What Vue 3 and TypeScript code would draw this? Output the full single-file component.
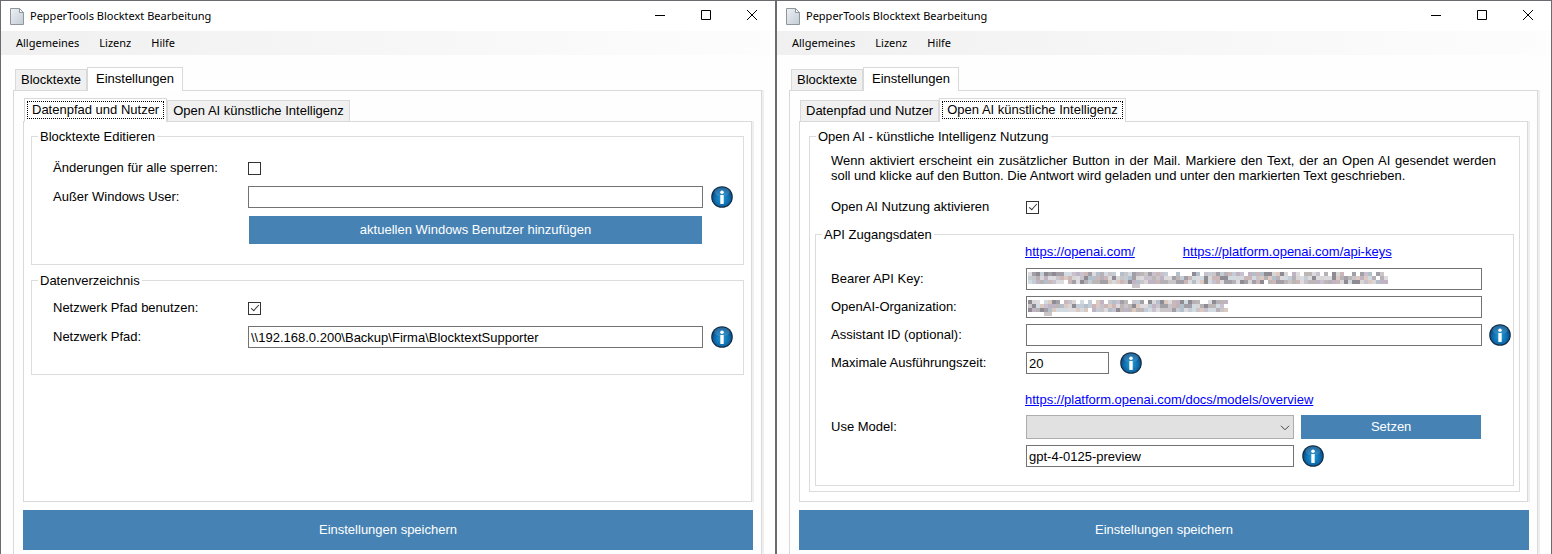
<script setup lang="ts">
import { defineComponent, h, ref } from 'vue'

const title = 'PepperTools Blocktext Bearbeitung'
const menus = ['Allgemeines', 'Lizenz', 'Hilfe']
const outerTabs = ['Blocktexte', 'Einstellungen']
const innerTabs = ['Datenpfad und Nutzer', 'Open AI künstliche Intelligenz']
const windows = [
  { id: 'paths', active: 0 },
  { id: 'openai', active: 1 },
]

const lockAll = ref(false)
const exceptUser = ref('')
const useNetwork = ref(true)
const networkPath = ref('\\\\192.168.0.200\\Backup\\Firma\\BlocktextSupporter')
const aiEnabled = ref(true)
const assistantId = ref('')
const maxTime = ref('20')
const model = ref('')
const modelName = ref('gpt-4-0125-preview')

interface Cell { x: number; y: number; fill: string }

const palette = [
  '#c9c5c9', '#b5b1b6', '#d9d6d8', '#a39fa6', '#c4ccd6', '#dcc9bf', '#bfb3c4',
  '#8f8b92', '#d3dbe2', '#cbb7b8', '#dedbde', '#b3bfcb', '#bcb6b6', '#c8c2ce',
]

function mosaic(columns: number, seed: number, tails: number[]): Cell[] {
  const cells: Cell[] = []
  let state = seed
  const next = (): number => {
    state = (state * 1103515245 + 12345) % 2147483648
    return Math.floor(state / 65536)
  }
  for (let c = 0; c < columns; c++) {
    for (let r = 0; r < 3; r++) {
      const skip = r === 0 ? next() % 5 === 0 : next() % 25 === 0
      const fill = palette[next() % palette.length]
      if (!skip) cells.push({ x: c * 4, y: r * 4, fill })
    }
  }
  for (const c of tails) cells.push({ x: c * 4, y: 12, fill: '#c9c5c9' })
  return cells
}

const secrets = [
  { id: 'api-key', label: 'Bearer API Key:', width: 360, cells: mosaic(90, 71, [26, 27]) },
  { id: 'organization', label: 'OpenAI-Organization:', width: 200, cells: mosaic(50, 29, [4, 5]) },
]

const InfoButton = defineComponent({
  props: { uid: { type: String, required: true } },
  setup(props) {
    return () =>
      h('button', { type: 'button', class: 'info', 'aria-label': 'Info' }, [
        h('svg', { viewBox: '0 0 22 22', width: 22, height: 22 }, [
          h('defs', [
            h('radialGradient', { id: props.uid, cx: '50%', cy: '58%', r: '52%' }, [
              h('stop', { offset: '0', 'stop-color': '#1fa0d8' }),
              h('stop', { offset: '0.65', 'stop-color': '#0f6fb0' }),
              h('stop', { offset: '1', 'stop-color': '#0b4c86' }),
            ]),
          ]),
          h('circle', { cx: 11, cy: 11, r: 10.8, fill: '#12283c' }),
          h('circle', { cx: 11, cy: 11, r: 9.8, fill: `url(#${props.uid})` }),
          h('ellipse', { cx: 11, cy: 6, rx: 7.6, ry: 4.6, fill: '#5fa9d4', opacity: 0.35 }),
          h('circle', { cx: 11, cy: 6.2, r: 1.8, fill: '#fff' }),
          h('rect', { x: 9.3, y: 9, width: 3.4, height: 9, rx: 0.6, fill: '#fff' }),
        ]),
      ])
  },
})
</script>

<template>
  <main class="desktop">
    <section v-for="win in windows" :key="win.id" class="window" :aria-label="title">
      <header class="titlebar">
        <svg class="doc" viewBox="0 0 14 17" width="14" height="17" aria-hidden="true">
          <defs>
            <linearGradient :id="`doc-${win.id}`" x1="0" y1="0" x2="1" y2="1">
              <stop offset="0" stop-color="#eef1f4" />
              <stop offset="1" stop-color="#c3ccd5" />
            </linearGradient>
          </defs>
          <path d="M.5.5H9.5L13.5 4.5V16.5H.5Z" :fill="`url(#doc-${win.id})`" stroke="#8e969e" />
          <path d="M9.5.5V4.5H13.5Z" fill="#fafbfc" stroke="#8e969e" stroke-linejoin="round" />
        </svg>
        <span class="title">{{ title }}</span>
        <button type="button" class="caption" aria-label="Minimieren">
          <svg viewBox="0 0 12 12" width="12" height="12"><path d="M1 5.5H11" /></svg>
        </button>
        <button type="button" class="caption" aria-label="Maximieren">
          <svg viewBox="0 0 12 12" width="12" height="12"><path d="M1.5.5H10.5V9.5H1.5Z" /></svg>
        </button>
        <button type="button" class="caption" aria-label="Schließen">
          <svg viewBox="0 0 12 12" width="12" height="12"><path d="M1 0L11 10M11 0L1 10" /></svg>
        </button>
      </header>

      <nav class="menubar">
        <button v-for="m in menus" :key="m" type="button">{{ m }}</button>
      </nav>

      <div class="client">
        <div class="tabs" role="tablist">
          <button
            v-for="(tab, i) in outerTabs" :key="tab" type="button" role="tab"
            class="tab" :class="{ active: i === 1 }" :aria-selected="i === 1"
          ><span>{{ tab }}</span></button>
        </div>

        <div class="page outer">
          <div class="tabs" role="tablist">
            <button
              v-for="(tab, i) in innerTabs" :key="tab" type="button" role="tab"
              class="tab" :class="{ active: i === win.active, focus: i === win.active }"
              :aria-selected="i === win.active"
            ><span>{{ tab }}</span></button>
          </div>

          <div v-if="win.id === 'paths'" class="page inner">
            <fieldset class="group edit">
              <legend>Blocktexte Editieren</legend>
              <div class="row">
                <label for="lock-all">Änderungen für alle sperren:</label>
                <input id="lock-all" v-model="lockAll" type="checkbox" />
              </div>
              <div class="row">
                <label for="except-user">Außer Windows User:</label>
                <input id="except-user" v-model="exceptUser" type="text" class="grow" />
                <InfoButton uid="info-user" />
              </div>
              <div class="row add">
                <button type="button" class="primary grow">aktuellen Windows Benutzer hinzufügen</button>
              </div>
            </fieldset>

            <fieldset class="group directory">
              <legend>Datenverzeichnis</legend>
              <div class="row">
                <label for="use-network">Netzwerk Pfad benutzen:</label>
                <input id="use-network" v-model="useNetwork" type="checkbox" />
              </div>
              <div class="row">
                <label for="network-path">Netzwerk Pfad:</label>
                <input id="network-path" v-model="networkPath" type="text" class="grow" />
                <InfoButton uid="info-path" />
              </div>
            </fieldset>
          </div>

          <div v-else class="page inner ai">
            <fieldset class="group usage">
              <legend>Open AI - künstliche Intelligenz Nutzung</legend>
              <p class="hint">
                Wenn aktiviert erscheint ein zusätzlicher Button in der Mail. Markiere den Text, der an
                Open AI gesendet werden soll und klicke auf den Button. Die Antwort wird geladen und
                unter den markierten Text geschrieben.
              </p>
              <div class="row enable">
                <label for="ai-enabled">Open AI Nutzung aktivieren</label>
                <input id="ai-enabled" v-model="aiEnabled" type="checkbox" />
              </div>

              <fieldset class="group access">
                <legend>API Zugangsdaten</legend>
                <div class="links">
                  <a href="https://openai.com/">https://openai.com/</a>
                  <a href="https://platform.openai.com/api-keys">https://platform.openai.com/api-keys</a>
                </div>
                <div v-for="s in secrets" :key="s.id" class="row">
                  <label :for="s.id">{{ s.label }}</label>
                  <div class="secret grow">
                    <input :id="s.id" type="text" />
                    <svg :width="s.width" height="16" shape-rendering="crispEdges" aria-hidden="true">
                      <rect
                        v-for="(cell, i) in s.cells" :key="i"
                        :x="cell.x" :y="cell.y" width="4" height="4" :fill="cell.fill"
                      />
                    </svg>
                  </div>
                </div>
                <div class="row assistant">
                  <label for="assistant-id">Assistant ID (optional):</label>
                  <input id="assistant-id" v-model="assistantId" type="text" class="grow" />
                  <InfoButton uid="info-assistant" />
                </div>
                <div class="row time">
                  <label for="max-time">Maximale Ausführungszeit:</label>
                  <input id="max-time" v-model="maxTime" type="text" />
                  <InfoButton uid="info-time" />
                </div>
                <div class="links models">
                  <a href="https://platform.openai.com/docs/models/overview">https://platform.openai.com/docs/models/overview</a>
                </div>
                <div class="model">
                  <label for="model">Use Model:</label>
                  <div class="select">
                    <select id="model" v-model="model"><option value=""></option></select>
                    <svg viewBox="0 0 10 6" width="10" height="6" aria-hidden="true"><path d="M1 .8L5 4.8L9 .8" /></svg>
                  </div>
                  <button type="button" class="primary">Setzen</button>
                  <input v-model="modelName" type="text" class="name" aria-label="Model" />
                  <InfoButton uid="info-model" />
                </div>
              </fieldset>
            </fieldset>
          </div>

          <button type="button" class="primary save">Einstellungen speichern</button>
        </div>
      </div>
    </section>
  </main>
</template>

<style>
body {
  margin: 0;
  background: #fff;
}
</style>

<style scoped>
.desktop {
  display: grid;
  grid-template-columns: 1fr 1fr;
  min-height: 100vh;
  font: 13px/16px "Liberation Sans", Arial, sans-serif;
  color: #000;
}
.desktop :deep(button),
input,
select {
  box-sizing: border-box;
  margin: 0;
  border: 0;
  border-radius: 0;
  padding: 0;
  background: none;
  color: inherit;
  font: inherit;
}
.window {
  display: flex;
  flex-direction: column;
  min-width: 0;
  border: 1px solid #6c6a6e;
  border-bottom: 0;
  background: #fefefe;
}
.titlebar {
  display: flex;
  align-items: center;
  height: 30px;
  padding-left: 9px;
  background: #fff;
  font: 11px/16px "Noto Sans", "Open Sans", sans-serif;
}
.title {
  flex: 1;
  padding-left: 6px;
}
.titlebar .caption {
  display: flex;
  align-items: center;
  justify-content: center;
  width: 46px;
  height: 28px;
}
.caption path {
  fill: none;
  stroke: #000;
}
.menubar {
  display: flex;
  gap: 20px;
  height: 24px;
  padding-left: 15px;
  background: linear-gradient(90deg, #f0f0f0, #fdfdfd);
}
.desktop .menubar button {
  font: 11px/24px "Noto Sans", "Open Sans", sans-serif;
}
.client {
  display: flex;
  flex: 1;
  flex-direction: column;
  padding: 12px 13px 0 12px;
}
.tabs {
  display: flex;
  align-items: flex-end;
  padding-left: 2px;
}
.desktop .tab {
  height: 21px;
  padding: 0 5px;
  border: 1px solid #d9d9d9;
  border-bottom: 0;
  background: #f0f0f0;
  white-space: nowrap;
}
.desktop .tab.active {
  position: relative;
  height: 24px;
  margin-bottom: -1px;
  padding: 0 8px 2px;
  background: #fff;
}
.desktop .tab.focus {
  padding: 0 2px 2px;
}
.tab.focus span {
  display: block;
  padding: 0 4px;
  border: 1px dotted #000;
}
.page {
  display: flex;
  flex-direction: column;
  border: 1px solid #d9d9d9;
  box-shadow: 2px 0 0 #efefef;
}
.outer {
  flex: 1;
  padding: 7px 8px 4px 9px;
  border-bottom: 0;
}
.outer > .tabs {
  margin-left: -1px;
  height: 23px;
}
.inner {
  flex: 1;
  gap: 6px;
  margin-right: 1px;
  padding: 5px 7px 9px;
  background: #fff;
}
.group {
  min-width: 0;
  margin: 0;
  border: 1px solid #dcdcdc;
  padding: 0 10px 0 21px;
}
legend {
  margin-left: -15px;
  padding: 2px 2px 0;
}
.edit {
  padding-top: 12px;
  padding-bottom: 20px;
}
.directory {
  padding-top: 8px;
  padding-bottom: 26px;
}
.row {
  display: flex;
  align-items: center;
  height: 22px;
}
.row + .row {
  margin-top: 7px;
}
.row label {
  flex: none;
  width: 195px;
}
.grow {
  flex: 1;
  min-width: 0;
}
.row.add {
  height: 28px;
  margin: 8px 31px 0 196px;
}
input[type="text"] {
  height: 22px;
  border: 1px solid #737373;
  padding: 0 3px 0 2px;
  background: #fff;
}
input[type="checkbox"] {
  position: relative;
  width: 13px;
  height: 13px;
  border: 1px solid #333;
  background: #fff;
  appearance: none;
}
input[type="checkbox"]:checked::after {
  position: absolute;
  top: 0;
  left: 4px;
  width: 3px;
  height: 7px;
  border: solid #333;
  border-width: 0 1px 1px 0;
  content: "";
  transform: rotate(42deg);
}
.desktop :deep(.info) {
  flex: none;
  width: 22px;
  height: 22px;
  margin-left: 8px;
}
.desktop :deep(.info svg) {
  display: block;
}
.desktop .primary {
  align-self: stretch;
  background: #4682b4;
  color: #fff;
}
.desktop .save {
  flex: none;
  height: 40px;
  margin-top: 8px;
}
.ai {
  padding: 5px 7px 9px 9px;
}
.usage {
  flex: 1;
  padding: 8px 5px 5px;
}
.usage > legend {
  margin-left: 1px;
}
.hint {
  margin: 0 18px 0 16px;
  line-height: 15px;
  text-align: justify;
}
.enable {
  margin: 13px 0 7px 16px;
}
.access {
  padding: 0 2px 18px 15px;
}
.access > legend {
  margin-left: -9px;
}
.links {
  display: flex;
  gap: 48px;
  margin: 1px 0 8px 194px;
}
a {
  color: #00f;
}
.access .row + .row {
  margin-top: 6px;
}
.secret {
  position: relative;
  margin-right: 29px;
}
.secret input {
  display: block;
  width: 100%;
}
.secret svg {
  position: absolute;
  top: 4px;
  left: 2px;
}
.assistant :deep(.info) {
  margin-left: 7px;
}
.time input {
  width: 83px;
}
.time :deep(.info) {
  margin-left: 11px;
}
.links.models {
  margin-top: 18px;
  margin-bottom: 7px;
}
.model {
  display: grid;
  grid-template-columns: 195px 10fr 7fr;
  gap: 6px 0;
  align-items: center;
  margin-right: 29px;
}
.select {
  position: relative;
  height: 24px;
}
.select select {
  width: 100%;
  height: 24px;
  border: 1px solid #adadad;
  background: #e1e1e1;
  appearance: none;
}
.select svg {
  position: absolute;
  top: 10px;
  right: 4px;
  pointer-events: none;
}
.select path {
  fill: none;
  stroke: #444;
}
.desktop .model .primary {
  margin: 0 1px 0 7px;
}
.name {
  grid-column: 2;
}
</style>
